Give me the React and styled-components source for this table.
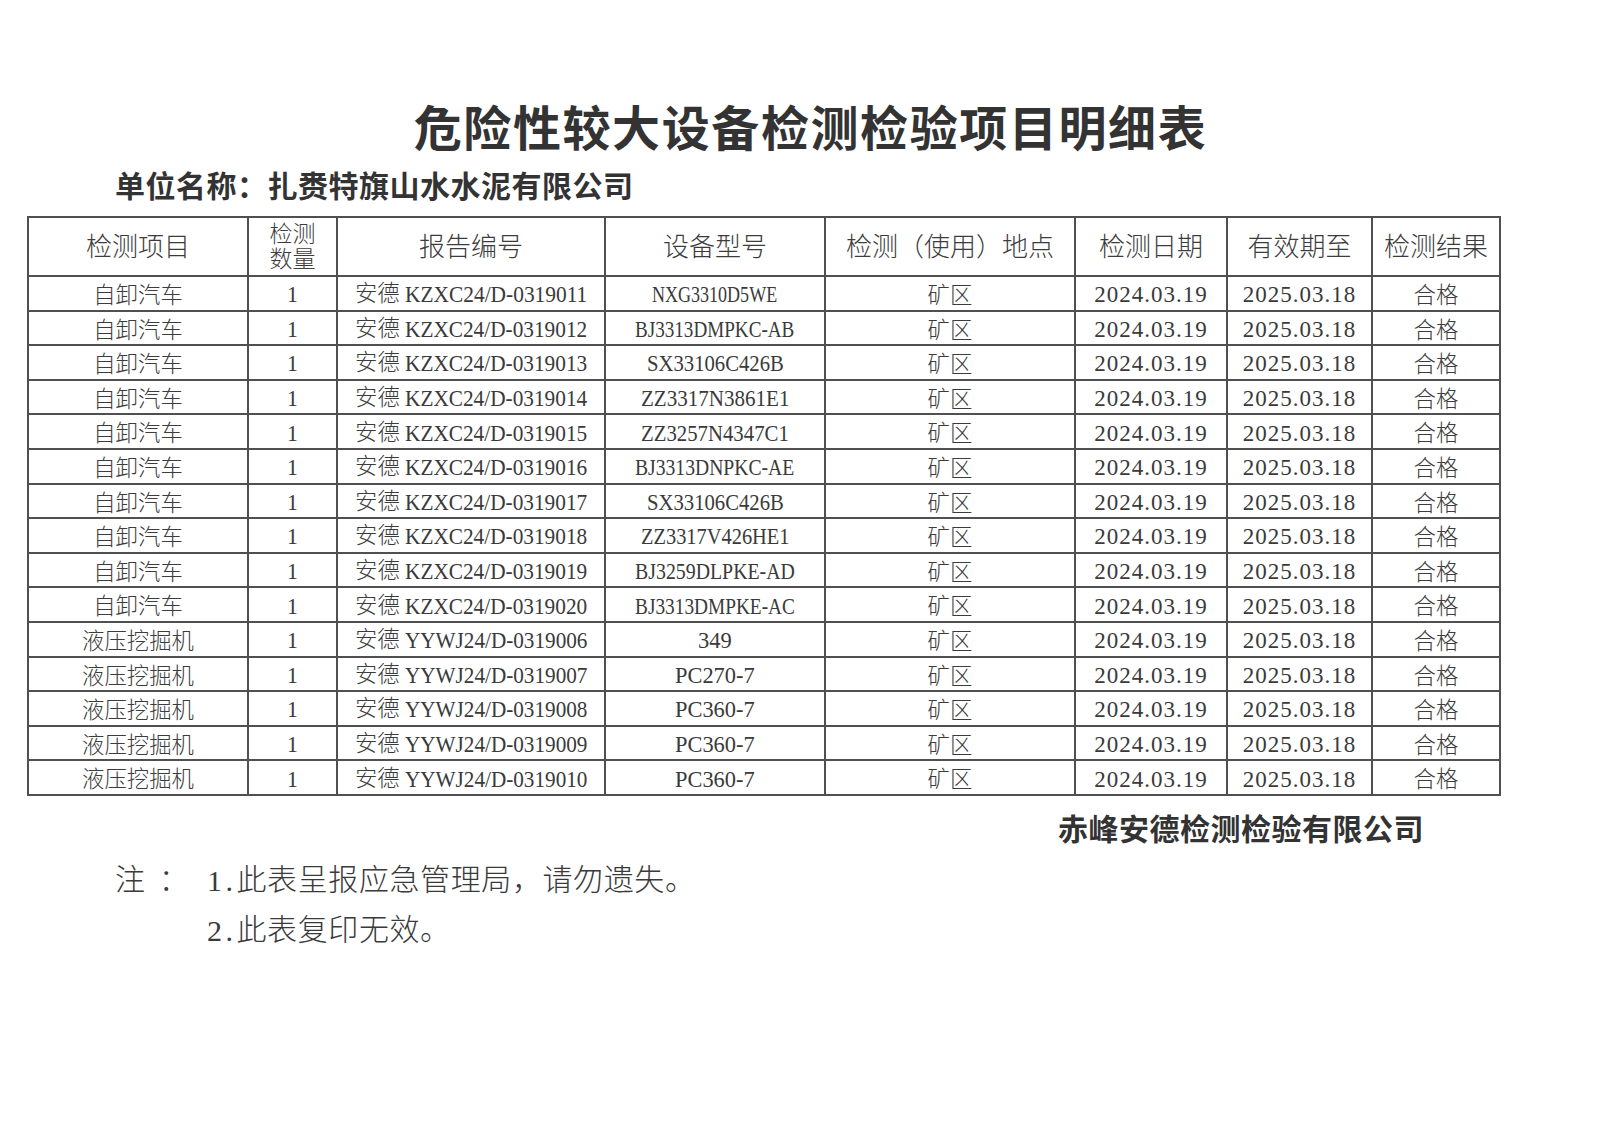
import React, { useLayoutEffect, useRef, useState } from "react";
import styled, { createGlobalStyle } from "styled-components";

const Global = createGlobalStyle`
  html, body { margin: 0; padding: 0; background: #ffffff; }
  body { font-family: "Noto Sans CJK SC", sans-serif; color: #3a3a3a; }
`;

const Page = styled.div`
  width: 1600px;
  min-height: 1131px;
  box-sizing: border-box;
  padding-top: 97px;
  display: flex;
  flex-direction: column;
`;

const Title = styled.h1`
  margin: 0;
  padding-left: 21px;
  text-align: center;
  font-family: "Noto Sans CJK SC", sans-serif;
  font-weight: 700;
  font-size: 48px;
  letter-spacing: 1.6px;
  line-height: 56px;
  color: #333;
`;

const Unit = styled.div`
  margin: 11px 0 0 115px;
  font-family: "Noto Sans CJK SC", sans-serif;
  font-weight: 700;
  font-size: 30px;
  letter-spacing: 0.5px;
  line-height: 40px;
  color: #333;
`;

const Table = styled.table`
  margin: 12px 0 0 27px;
  width: 1472px;
  border-collapse: collapse;
  table-layout: fixed;
  font-family: "Noto Sans CJK SC", sans-serif;
  color: #3c3c3c;
`;

const Th = styled.th`
  border: 2px solid #505050;
  height: 59px;
  padding: 0 0 3px;
  box-sizing: border-box;
  font-weight: 300;
  font-size: 26px;
  line-height: 1;
  text-align: center;
  vertical-align: middle;
`;

const StackLine = styled.span`
  display: block;
  font-size: 23px;
  line-height: 25px;
  height: 25px;
  overflow: visible;
`;

const Td = styled.td`
  border: 2px solid #505050;
  height: 32.6px;
  padding: 0;
  font-weight: 300;
  font-size: 22.4px;
  line-height: 1;
  text-align: center;
  vertical-align: middle;
  white-space: nowrap;
`;

const LatinRun = styled.span`
  display: inline-block;
  font-family: "Liberation Serif", "Times New Roman", serif;
  font-weight: 400;
  font-size: ${(p) => p.$size}px;
  line-height: 1;
  white-space: pre;
  transform-origin: 0 50%;
  vertical-align: -1px;
  color: #3a3a3a;
`;

function Latin({ children, size = 23, width, adv = 11.4 }) {
  const text = String(children);
  const target = width ?? text.length * adv;
  const ref = useRef(null);
  const [fit, setFit] = useState(null);
  useLayoutEffect(() => {
    const natural = ref.current.offsetWidth;
    if (natural > target) {
      setFit({ scale: target / natural, pull: natural - target, ls: 0 });
    } else {
      setFit({ scale: 1, pull: 0, ls: (target - natural) / text.length });
    }
  }, [text, target]);
  const style = fit
    ? {
        transform: `scaleX(${fit.scale})`,
        marginRight: -fit.pull,
        letterSpacing: fit.ls,
      }
    : undefined;
  return (
    <LatinRun ref={ref} $size={size} style={style}>
      {text}
    </LatinRun>
  );
}

const Company = styled.div`
  margin: 11px 176px 0 0;
  align-self: flex-end;
  font-family: "Noto Sans CJK SC", sans-serif;
  font-weight: 700;
  font-size: 30px;
  letter-spacing: 0.5px;
  line-height: 40px;
  color: #333;
`;

const Notes = styled.div`
  margin: 5px 0 0 115px;
  display: grid;
  grid-template-columns: 92px auto;
  font-family: "Noto Sans CJK SC", sans-serif;
  font-weight: 300;
  font-size: 30px;
  letter-spacing: 0.6px;
  line-height: 50px;
  color: #3a3a3a;
`;

const NoteLabel = styled.span`
  white-space: pre;
  word-spacing: 6px;
`;

const cols = [220, 89, 268, 220, 250, 152, 145, 128];

const rows = [
  ["自卸汽车", "KZXC24/D-0319011", "NXG3310D5WE"],
  ["自卸汽车", "KZXC24/D-0319012", "BJ3313DMPKC-AB"],
  ["自卸汽车", "KZXC24/D-0319013", "SX33106C426B"],
  ["自卸汽车", "KZXC24/D-0319014", "ZZ3317N3861E1"],
  ["自卸汽车", "KZXC24/D-0319015", "ZZ3257N4347C1"],
  ["自卸汽车", "KZXC24/D-0319016", "BJ3313DNPKC-AE"],
  ["自卸汽车", "KZXC24/D-0319017", "SX33106C426B"],
  ["自卸汽车", "KZXC24/D-0319018", "ZZ3317V426HE1"],
  ["自卸汽车", "KZXC24/D-0319019", "BJ3259DLPKE-AD"],
  ["自卸汽车", "KZXC24/D-0319020", "BJ3313DMPKE-AC"],
  ["液压挖掘机", "YYWJ24/D-0319006", "349"],
  ["液压挖掘机", "YYWJ24/D-0319007", "PC270-7"],
  ["液压挖掘机", "YYWJ24/D-0319008", "PC360-7"],
  ["液压挖掘机", "YYWJ24/D-0319009", "PC360-7"],
  ["液压挖掘机", "YYWJ24/D-0319010", "PC360-7"],
];

export default function App() {
  return (
    <>
      <Global />
      <Page>
        <Title>危险性较大设备检测检验项目明细表</Title>
        <Unit>单位名称：扎赉特旗山水水泥有限公司</Unit>
        <Table>
          <colgroup>
            {cols.map((w, i) => (
              <col key={i} style={{ width: w }} />
            ))}
          </colgroup>
          <thead>
            <tr>
              <Th>检测项目</Th>
              <Th>
                <StackLine>检测</StackLine>
                <StackLine>数量</StackLine>
              </Th>
              <Th>报告编号</Th>
              <Th>设备型号</Th>
              <Th>检测（使用）地点</Th>
              <Th>检测日期</Th>
              <Th>有效期至</Th>
              <Th>检测结果</Th>
            </tr>
          </thead>
          <tbody>
            {rows.map((r, i) => (
              <tr key={i}>
                <Td>{r[0]}</Td>
                <Td><Latin>1</Latin></Td>
                <Td>安德 <Latin>{r[1]}</Latin></Td>
                <Td><Latin>{r[2]}</Latin></Td>
                <Td>矿区</Td>
                <Td><Latin>2024.03.19</Latin></Td>
                <Td><Latin>2025.03.18</Latin></Td>
                <Td>合格</Td>
              </tr>
            ))}
          </tbody>
        </Table>
        <Company>赤峰安德检测检验有限公司</Company>
        <Notes>
          <NoteLabel>注 ：</NoteLabel>
          <span><Latin size={30} width={31}>1.</Latin>此表呈报应急管理局，请勿遗失。</span>
          <span />
          <span><Latin size={30} width={31}>2.</Latin>此表复印无效。</span>
        </Notes>
      </Page>
    </>
  );
}
